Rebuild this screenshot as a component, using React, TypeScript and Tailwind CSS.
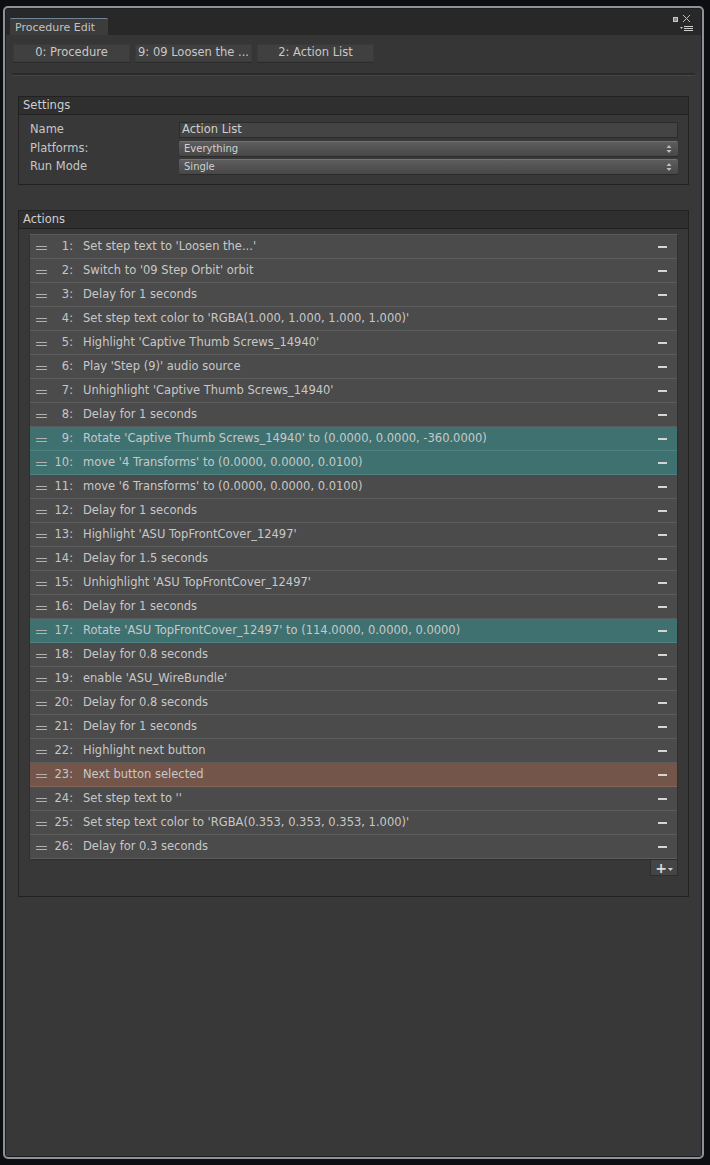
import React from "react";

type Row = { n: number; t: string; c?: "teal" | "orange" };

const rows: Row[] = [
  { n: 1, t: "Set step text to 'Loosen the...'" },
  { n: 2, t: "Switch to '09 Step Orbit' orbit" },
  { n: 3, t: "Delay for 1 seconds" },
  { n: 4, t: "Set step text color to 'RGBA(1.000, 1.000, 1.000, 1.000)'" },
  { n: 5, t: "Highlight 'Captive Thumb Screws_14940'" },
  { n: 6, t: "Play 'Step (9)' audio source" },
  { n: 7, t: "Unhighlight 'Captive Thumb Screws_14940'" },
  { n: 8, t: "Delay for 1 seconds" },
  { n: 9, t: "Rotate 'Captive Thumb Screws_14940' to (0.0000, 0.0000, -360.0000)", c: "teal" },
  { n: 10, t: "move '4 Transforms' to (0.0000, 0.0000, 0.0100)", c: "teal" },
  { n: 11, t: "move '6 Transforms' to (0.0000, 0.0000, 0.0100)" },
  { n: 12, t: "Delay for 1 seconds" },
  { n: 13, t: "Highlight 'ASU TopFrontCover_12497'" },
  { n: 14, t: "Delay for 1.5 seconds" },
  { n: 15, t: "Unhighlight 'ASU TopFrontCover_12497'" },
  { n: 16, t: "Delay for 1 seconds" },
  { n: 17, t: "Rotate 'ASU TopFrontCover_12497' to (114.0000, 0.0000, 0.0000)", c: "teal" },
  { n: 18, t: "Delay for 0.8 seconds" },
  { n: 19, t: "enable 'ASU_WireBundle'" },
  { n: 20, t: "Delay for 0.8 seconds" },
  { n: 21, t: "Delay for 1 seconds" },
  { n: 22, t: "Highlight next button" },
  { n: 23, t: "Next button selected", c: "orange" },
  { n: 24, t: "Set step text to ''" },
  { n: 25, t: "Set step text color to 'RGBA(0.353, 0.353, 0.353, 1.000)'" },
  { n: 26, t: "Delay for 0.3 seconds" },
];

const font = { fontFamily: '"DejaVu Sans", Verdana, sans-serif' };

function Arrows() {
  return (
    <svg width="6" height="10" viewBox="0 0 6 10" className="shrink-0">
      <path d="M3 1 L5.5 4 L0.5 4 Z" fill="#bdbdbd" />
      <path d="M3 9 L5.5 6 L0.5 6 Z" fill="#bdbdbd" />
    </svg>
  );
}

function Dropdown({ text }: { text: string }) {
  return (
    <div className="flex h-[15px] items-center justify-between rounded-[2px] border-t border-[#737373] bg-gradient-to-b from-[#5d5d5d] to-[#474747] pl-[5px] pr-[6px] shadow-[0_1px_0_#2a2a2a]">
      <span className="text-[10px] leading-none text-[#d0d0d0]">{text}</span>
      <Arrows />
    </div>
  );
}

function RowItem({ r }: { r: Row }) {
  const bg =
    r.c === "teal"
      ? "bg-[#3f7171] border-[#4d8282]"
      : r.c === "orange"
      ? "bg-[#74554a] border-[#86665a]"
      : "bg-[#4b4b4b] border-[#5c5c5c]";
  return (
    <div className={`flex h-[24px] items-center border-b ${bg}`}>
      <div className="ml-[6px] flex w-[11px] flex-col gap-[2px] pt-[2px]">
        <div className="h-px bg-[#b0b0b0]" />
        <div className="h-px bg-[#b0b0b0]" />
      </div>
      <div className="w-[26px] text-right text-[#c6c6c6]">{r.n}:</div>
      <div className="ml-[10px] flex-1 whitespace-nowrap text-[#c8c8c8]">{r.t}</div>
      <div className="mr-[10px] h-[2px] w-[9px] bg-[#d4d4d4]" />
    </div>
  );
}

export default function App() {
  return (
    <div
      className="relative h-[1165px] w-[710px] overflow-hidden bg-[#0d0e11] text-[11.5px] leading-none"
      style={font}
    >
      <div className="absolute left-[3px] top-[6px] h-[1153px] w-[701px] rounded-[5px] border-2 border-[#8e9298] bg-[#1c1d20] p-[1px]">
        <div className="flex h-full flex-col bg-[#383838]">
          {/* title bar */}
          <div className="relative flex h-[26px] shrink-0 items-end bg-[#282828] pl-[4px]">
            <div className="flex h-[17px] w-[98px] items-center rounded-t-[2px] border-t border-[#6f8499] bg-[#3c3c3c] pl-[5px] text-[11px] text-[#c2c2c2]">
              Procedure Edit
            </div>
            <div className="absolute right-[23px] top-[8px] h-[5px] w-[5px] border border-[#c8c8c8] bg-[#8a8a8a]" />
            <svg className="absolute right-[10px] top-[5px]" width="9" height="9" viewBox="0 0 9 9">
              <path d="M1 1 L8 8 M8 1 L1 8" stroke="#bdbdbd" strokeWidth="1" />
            </svg>
            <svg className="absolute right-[7px] top-[16px]" width="14" height="7" viewBox="0 0 14 7">
              <path d="M0 2 L3 2 L1.5 4 Z" fill="#c8c8c8" />
              <path d="M4 1.5 H13 M4 3.5 H13 M4 5.5 H13" stroke="#d0d0d0" strokeWidth="1" />
            </svg>
          </div>
          {/* toolbar */}
          <div className="flex h-[38px] shrink-0 gap-[5px] bg-[#363636] pl-[7px] pt-[9px]">
            {["0: Procedure", "9: 09 Loosen the ...", "2: Action List"].map((b) => (
              <div
                key={b}
                className="flex h-[18px] w-[117px] items-center justify-center border border-[#3a3a3a] bg-[#404040] text-[#c8c8c8] shadow-[0_1px_0_#2c2c2c]"
              >
                {b}
              </div>
            ))}
          </div>
          <div className="mx-[6px] h-[2px] shrink-0 bg-[#2a2a2a]" />
          <div className="mx-[6px] h-px shrink-0 bg-[#464646]" />

          {/* Settings */}
          <div className="mx-[12px] mt-[20px] shrink-0 border border-[#222] bg-[#383838]">
            <div className="flex h-[18px] items-center border-b border-[#222] bg-[#2f2f2f] pl-[4px] text-[#cfcfcf]">
              Settings
            </div>
            <div className="flex flex-col gap-[3px] pb-[10px] pr-[10px] pt-[7px]">
              <div className="flex h-[16px] items-center">
                <div className="w-[160px] pl-[11px] text-[#c6c6c6]">Name</div>
                <div className="flex h-[16px] flex-1 items-center border border-[#2b2b2b] bg-[#444] pl-[2px] text-[#cfcfcf]">
                  Action List
                </div>
              </div>
              <div className="flex h-[15px] items-center">
                <div className="w-[160px] pl-[11px] text-[#c6c6c6]">Platforms:</div>
                <div className="flex-1">
                  <Dropdown text="Everything" />
                </div>
              </div>
              <div className="flex h-[15px] items-center">
                <div className="w-[160px] pl-[11px] text-[#c6c6c6]">Run Mode</div>
                <div className="flex-1">
                  <Dropdown text="Single" />
                </div>
              </div>
            </div>
          </div>

          {/* Actions */}
          <div className="mx-[12px] mt-[25px] shrink-0 border border-[#222] bg-[#383838]">
            <div className="flex h-[18px] items-center border-b border-[#222] bg-[#2f2f2f] pl-[4px] text-[#cfcfcf]">
              Actions
            </div>
            <div className="pl-[10px] pr-[10px] pt-[5px] pb-[20px]">
              <div className="border border-[#2f2f2f] border-t-[#5a5a5a]">
                {rows.map((r) => (
                  <RowItem key={r.n} r={r} />
                ))}
              </div>
              <div className="flex justify-end">
                <div className="flex h-[16px] w-[28px] items-center justify-center gap-[1px] border border-[#2d2d2d] border-t-0 bg-[#454545] text-[#dcdcdc]">
                  <span className="text-[14px] font-bold leading-none">+</span>
                  <svg width="5" height="4" viewBox="0 0 5 4" className="mt-[4px]">
                    <path d="M0 0 L5 0 L2.5 3 Z" fill="#cfcfcf" />
                  </svg>
                </div>
              </div>
            </div>
          </div>
          <div className="flex-1" />
        </div>
      </div>
    </div>
  );
}
